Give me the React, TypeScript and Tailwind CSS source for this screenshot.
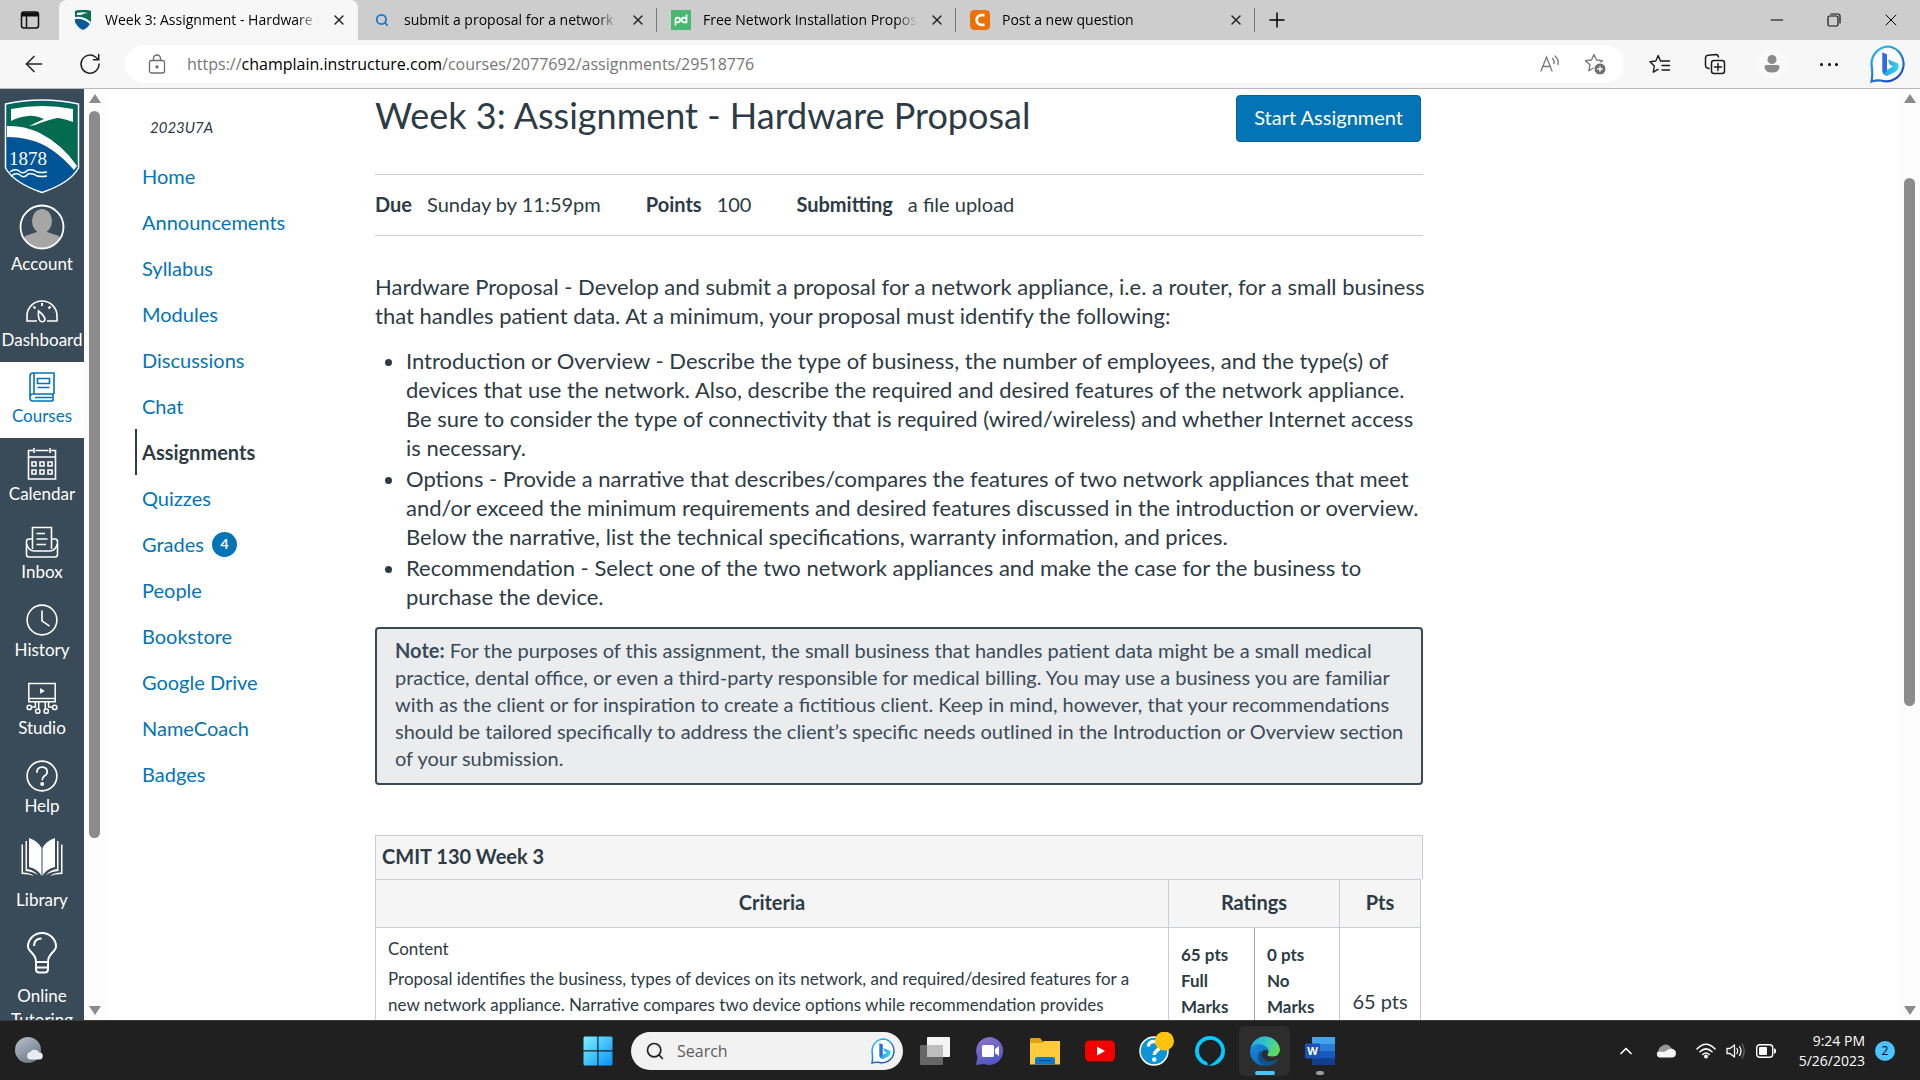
import React from 'react';
import { ArrowLeft, ChevronUp, Minus, Plus, Search, X } from 'lucide-react';

const uiFont = "font-['Open_Sans','Noto_Sans',sans-serif]";
const pageFont = "font-['Lato','Liberation_Sans',sans-serif]";

/* ---------- browser icons ---------- */

const ShieldFavicon = () => (
  <svg viewBox="0 0 18 20" className="h-5 w-[18px]">
    <path d="M1 1Q9-1 17 1V12Q15 17 9 20Q3 17 1 12Z" fill="#0b5a9c" />
    <path d="M1 1Q9-1 17 1V12Q12 6 1 6Z" fill="#0a7050" />
    <path d="M3 3Q9 1.500 14 3Q10 3 7 5L3 5ZM1 7Q10 6 17 12L16 14Q9 8 1 9Z" fill="#fff" />
  </svg>
);

const PandaFavicon = () => (
  <svg viewBox="0 0 20 20" className="h-5 w-5">
    <rect width="20" height="20" fill="#47b972" />
    <g fill="none" stroke="#fff" strokeWidth="1.700">
      <path d="M4.500 15.500V10A2.300 2.300 0 1 1 6.800 12.300H5.500" />
      <path d="M15.500 4.500V12.300H13A2.300 2.300 0 1 1 15.300 9.700" />
    </g>
  </svg>
);

const CheggFavicon = () => (
  <svg viewBox="0 0 20 20" className="h-5 w-5">
    <rect width="20" height="20" rx="4.500" fill="#eb7100" />
    <path d="M14.500 14.800H11.500A4.800 4.800 0 0 1 11.500 5.200H14.500" fill="none" stroke="#fff" strokeWidth="2.800" />
  </svg>
);

const BingLogo = ({ className }: { className: string }) => (
  <svg viewBox="0 0 38 38" className={className}>
    <defs>
      <linearGradient id="bingRing" x1="0" y1="0" x2="0.6" y2="1">
        <stop offset="0" stopColor="#26c4f0" />
        <stop offset="1" stopColor="#1e50c8" />
      </linearGradient>
      <linearGradient id="bingB" x1="0" y1="0" x2="1" y2="0.4">
        <stop offset="0" stopColor="#2d7de8" />
        <stop offset="1" stopColor="#2fd2ee" />
      </linearGradient>
    </defs>
    <path d="M19 1.500A17.500 17.500 0 1 1 11 35.500Q6 35 1.500 36.500Q3 30 1.500 19A17.500 17.500 0 0 1 19 1.500Z" fill="#fff" stroke="url(#bingRing)" strokeWidth="2.200" />
    <path d="M12.500 7.500L17 9.500V25L23 21.500L19.500 19.500L18 14.500L28 18.500Q30 23 26 26.500L17 31Q12.500 30 12.500 25.500Z" fill="url(#bingB)" />
    <path d="M12.500 7.500L17 9.500V25L13.500 29Q12.500 27.500 12.500 25.500Z" fill="#2b6fe3" />
  </svg>
);

const TabMenuIcon = () => (
  <svg viewBox="0 0 20 20" className="h-5 w-5" fill="none" stroke="#111" strokeWidth="1.500">
    <rect x="1.500" y="2" width="17" height="16" rx="2.500" />
    <path d="M2 4.500H18" strokeWidth="4" />
    <path d="M6.500 6V18" />
  </svg>
);

const RefreshIcon = () => (
  <svg viewBox="0 0 22 22" className="h-[22px] w-[22px]" fill="none" stroke="#222" strokeWidth="1.500" strokeLinecap="round">
    <path d="M20 11A9 9 0 1 1 16.500 4L19.500 6.500" />
    <path d="M19.700 1.500V6.700H14.500" />
  </svg>
);

const PadlockIcon = () => (
  <svg viewBox="0 0 18 20" className="h-5 w-[18px]" fill="none" stroke="#6b6b6b" strokeWidth="1.300">
    <rect x="1.500" y="6.500" width="15" height="12.500" rx="2" />
    <path d="M5.500 6.500V4.500A3.500 3.500 0 0 1 12.500 4.500V6.500" />
    <circle cx="9" cy="12.800" r="1" fill="#6b6b6b" />
  </svg>
);

const ReadAloudIcon = () => (
  <svg viewBox="0 0 20 20" className="h-5 w-5" fill="none" stroke="#777" strokeWidth="1.300" strokeLinecap="round">
    <path d="M1 17L6.500 3L12 17M3 12.500H10" />
    <path d="M12.500 4.500Q14.500 6.500 14 9.500M15 2Q19 5.500 18 10.500" />
  </svg>
);

const starPath = 'M10 1.500L12.500 7L18.500 7.700L14 11.800L15.200 17.800L10 14.800L4.800 17.800L6 11.800L1.500 7.700L7.500 7Z';

const AddFavoriteIcon = () => (
  <svg viewBox="0 0 22 22" className="h-[22px] w-[22px]">
    <path d={starPath} fill="none" stroke="#777" strokeWidth="1.300" strokeLinejoin="round" />
    <circle cx="16" cy="16" r="6" fill="#707070" stroke="#fff" />
    <path d="M16 13.300V18.700M13.300 16H18.700" stroke="#fff" strokeWidth="1.300" />
  </svg>
);

const FavoritesIcon = () => (
  <svg viewBox="0 0 22 20" className="h-5 w-[22px]" fill="none" stroke="#1b1b1b" strokeWidth="1.400" strokeLinecap="round" strokeLinejoin="round">
    <path d="M11.500 7L9.200 1.500L6.800 7L1 7.800L5.300 12L4.300 18.200L9 15.300M11.500 7H20.500M13 11.500H20.500M13 16H20.500" />
  </svg>
);

const CollectionsIcon = () => (
  <svg viewBox="0 0 22 22" className="h-[22px] w-[22px]" fill="none" stroke="#1b1b1b" strokeWidth="1.500" strokeLinecap="round">
    <rect x="7.500" y="7.500" width="13" height="13" rx="2.500" />
    <path d="M14 10.500V17.500M10.500 14H17.500" />
    <path d="M5 15.500L3.200 15Q1.500 14.300 1.500 12.500V4.500Q2 2.500 4 2.300L12 1.500Q14 1.500 14.500 4" />
  </svg>
);

/* ---------- Canvas icons ---------- */

const SchoolLogo = () => (
  <svg viewBox="0 0 76 95" className="h-[95px] w-[76px]" role="img" aria-label="Champlain College">
    <path d="M1.500 5Q38-3 74.500 5V69Q66 84 38 93.500Q10 84 1.500 69Z" fill="#005596" stroke="#fff" strokeWidth="1.500" />
    <path d="M3 6.500Q38-1 73 6.500V67Q58 44 30 32Q18 27 3 27Z" fill="#046a50" />
    <path d="M7 10Q38 4 69 10V23Q58 19 53 19Q44 21 36 24Q31 27 25 27L40 20Q30 16 24 17Q14 18 7 22Z" fill="#fff" />
    <path d="M3 27Q18 26 34 33Q58 45 73 67L70 71Q48 46 26 41Q16 38 3 38Z" fill="#fff" />
    <text x="5" y="66" fill="#fff" fontSize="19" fontFamily="Liberation Serif, serif">1878</text>
    <path d="M6 73Q11 69 15 72Q19 76 24 71Q29 70 33 73Q38 74 43 73M7 77Q12 73 16 76Q20 80 24 75Q29 74 33 77Q38 78 43 77" fill="none" stroke="#fff" strokeWidth="1.500" />
  </svg>
);

const AvatarIcon = () => (
  <svg viewBox="0 0 46 46" className="h-[46px] w-[46px]">
    <defs>
      <clipPath id="avatarClip"><circle cx="23" cy="23" r="21" /></clipPath>
    </defs>
    <circle cx="23" cy="23" r="21.500" fill="#394b58" />
    <g fill="#a6a6a6" clipPath="url(#avatarClip)">
      <ellipse cx="23" cy="17" rx="10" ry="12" />
      <path d="M18 25H28V28L40 32Q42 36 42 46H4Q4 36 6 32L18 28Z" />
    </g>
    <circle cx="23" cy="23" r="21.500" fill="none" stroke="#fff" strokeWidth="1.800" />
  </svg>
);

const line = { fill: 'none', stroke: 'currentColor', strokeWidth: 1.6 } as const;

const DashboardIcon = () => (
  <svg viewBox="0 0 34 30" className="h-[30px] w-[34px]" {...line}>
    <path d="M12 25H2V20A15 15 0 0 1 32 20V25H22" />
    <path d="M17 7V10M8.500 10.500L10.500 12.500M25.500 10.500L23.500 12.500" strokeWidth="2" />
    <path d="M13.500 15Q20 20 20 24A3 3 0 0 1 14.500 24Q13 21 13.500 15Z" />
  </svg>
);

const CoursesIcon = () => (
  <svg viewBox="0 0 26 30" className="h-[30px] w-[26px]" {...line}>
    <path d="M25 22V1H4Q1 1 1 4V26Q1 29 4 29H24M25 22H4Q1 22 1 25.500M24 22V29M5 1.500V22M6 25.500H23" />
    <path d="M8.500 6.500H20.500V11.500H8.500ZM8.500 15.500H20.500" />
  </svg>
);

const CalendarIcon = () => (
  <svg viewBox="0 0 30 32" className="h-8 w-[30px]" {...line}>
    <path d="M6 2.500H1.500V31H28.500V2.500H24M8.500 2.500H21.500M7 0V5M23 0V5M1.500 9H28.500" />
    <path d="M5 14H9V18H5ZM13 14H17V18H13ZM21 14H25V18H21ZM5 22H9V26H5ZM13 22H17V26H13ZM21 22H25V26H21Z" />
  </svg>
);

const InboxIcon = () => (
  <svg viewBox="0 0 34 32" className="h-8 w-[34px]" {...line}>
    <path d="M7.500 23V1.500H26.500V23M11.500 7.500H20M11.500 13H22.500M11.500 18.500H21" />
    <path d="M7.500 13H4Q1.500 13 1.500 15.500V28.500Q1.500 31 4 31H30Q32.500 31 32.500 28.500V15.500Q32.500 13 30 13H26.500" />
    <path d="M1.500 18Q4 25 9 25H25Q30 25 32.500 18" />
  </svg>
);

const HistoryIcon = () => (
  <svg viewBox="0 0 34 34" className="h-8 w-8" {...line} strokeWidth="1.700">
    <circle cx="17" cy="17" r="15.800" />
    <path d="M17 7V18L25 23.500" />
  </svg>
);

const StudioIcon = () => (
  <svg viewBox="0 0 34 34" className="h-8 w-8" {...line}>
    <path d="M3 1.500H31V21H3ZM3 17.500H31" />
    <path d="M15 6.500L20 9.500L15 12.500Z" fill="currentColor" stroke="none" />
    <path d="M10 21V26.500H5.500M13.500 21V29M20.500 21V29M24 21V26.500H28.500" />
    <circle cx="3.500" cy="27" r="2.300" /><circle cx="12.500" cy="31" r="2.300" />
    <circle cx="21.500" cy="31" r="2.300" /><circle cx="30.500" cy="27" r="2.300" />
  </svg>
);

const HelpIcon = () => (
  <svg viewBox="0 0 34 34" className="h-8 w-8" {...line} strokeWidth="1.800">
    <circle cx="17" cy="17" r="15.800" />
    <path d="M11.500 13.500Q11.500 7.500 17 7.500Q22.500 7.500 22.500 12.500Q22.500 15.500 19.500 17Q17.200 18.500 17.200 21.500" />
    <circle cx="17.200" cy="25.500" r="1.200" fill="currentColor" />
  </svg>
);

const LibraryIcon = () => (
  <svg viewBox="0 0 42 39" className="h-[39px] w-[42px]" fill="currentColor">
    <path d="M8 0Q17 3 20.500 10V38Q17 31 8 29ZM34 0Q25 3 21.500 10V38Q25 31 34 29Z" />
    <path d="M4.500 3H6V31Q13 32 17 37Q12 33.500 4.500 33ZM37.500 3H36V31Q29 32 25 37Q30 33.500 37.500 33Z" />
    <path d="M.5 6.500H2V34.500Q9 34.500 13 38Q8 36 .5 36ZM41.500 6.500H40V34.500Q33 34.500 29 38Q34 36 41.500 36Z" />
  </svg>
);

const BulbIcon = () => (
  <svg viewBox="0 0 30 42" className="h-[42px] w-[30px]" {...line} strokeWidth="2">
    <path d="M9 30Q9 25 5 21Q1 17 1 14.500A14 13.500 0 0 1 29 14.500Q29 17 25 21Q21 25 21 30V37Q21 40.500 18 40.500H12Q9 40.500 9 37ZM9 30H21M9 35.500H21" />
    <path d="M7 14Q7 6.500 14.500 6.500" />
  </svg>
);

/* ---------- taskbar icons ---------- */

const WeatherIcon = () => (
  <svg viewBox="0 0 28 28" className="h-7 w-7">
    <defs>
      <linearGradient id="moon" x1="0" y1="0" x2="0.7" y2="1">
        <stop offset="0" stopColor="#b9c3cf" />
        <stop offset="1" stopColor="#6f7986" />
      </linearGradient>
    </defs>
    <circle cx="13" cy="13" r="13" fill="url(#moon)" />
    <path d="M15 22.500A4 4 0 0 1 15.500 14.700A5 5 0 0 1 24 15.500A3.500 3.500 0 0 1 24.500 22.500Z" fill="#e9edf2" />
  </svg>
);

const StartIcon = () => (
  <svg viewBox="0 0 30 30" className="h-[30px] w-[30px]">
    <defs>
      <linearGradient id="win" x1="0" y1="0" x2="1" y2="1">
        <stop offset="0" stopColor="#7cf3ff" />
        <stop offset="1" stopColor="#0890f8" />
      </linearGradient>
    </defs>
    <path d="M2 .5H14.300V14.300H.5V2Q.5.500 2 .5ZM15.500.5H28Q29.500.5 29.500 2V14.300H15.500ZM.5 15.500H14.300V29.500H2Q.5 29.500.5 28ZM15.500 15.500H29.500V28Q29.500 29.500 28 29.500H15.500Z" fill="url(#win)" />
  </svg>
);

const TaskViewIcon = () => (
  <svg viewBox="0 0 30 30" className="h-[30px] w-[30px]">
    <rect y="9" width="23" height="20" rx="1" fill="#666" />
    <rect x="7" y="1" width="23" height="20" rx="1" fill="#f4f4f4" />
    <rect x="7" y="9" width="16" height="12" fill="#bdbdbd" />
  </svg>
);

const ChatIcon = () => (
  <svg viewBox="0 0 30 30" className="h-[30px] w-[30px]">
    <defs>
      <linearGradient id="chat" x1="0.2" y1="0" x2="0.6" y2="1">
        <stop offset="0" stopColor="#8b74c8" />
        <stop offset="1" stopColor="#4f55c8" />
      </linearGradient>
    </defs>
    <path d="M15 1A14 14 0 1 1 9 28L1 29L2.500 21A14 14 0 0 1 15 1Z" fill="url(#chat)" />
    <rect x="7" y="9" width="12" height="12" rx="1.500" fill="#fff" />
    <path d="M20 13L24 10V20L20 17Z" fill="#fff" />
  </svg>
);

const ExplorerIcon = () => (
  <svg viewBox="0 0 30 30" className="h-[30px] w-[30px]">
    <path d="M0 3Q0 2 1 2H10L13 5.500H12V9H0Z" fill="#e2a10c" />
    <path d="M0 7H11L14 5H30V28.500H0Z" fill="#ffcb3d" />
    <path d="M5 28.500V23Q5 21 7 21H23Q25 21 25 23V28.500Z" fill="#0f78cc" />
    <path d="M9 24.500H21" stroke="#0b4f8d" />
  </svg>
);

const YoutubeIcon = () => (
  <svg viewBox="0 0 30 30" className="h-[30px] w-[30px]">
    <rect y="4.500" width="30" height="21" rx="4.500" fill="#f40000" />
    <path d="M12 10.500L20 15L12 19.500Z" fill="#fff" />
  </svg>
);

const GetHelpIcon = () => (
  <svg viewBox="0 0 38 38" className="h-[38px] w-[38px]">
    <circle cx="18" cy="19" r="14" fill="#0c94d6" stroke="#fff" strokeWidth="1.500" />
    <path d="M12.500 14.500Q12.500 9.500 18 9.500Q23.500 9.500 23.500 14.500Q23.500 17 20.500 19Q18.300 20.500 18.300 23" fill="none" stroke="#fff" strokeWidth="3.400" />
    <circle cx="18.300" cy="27.500" r="2.200" fill="#fff" />
    <circle cx="28.500" cy="9" r="9.500" fill="#ffc20e" />
  </svg>
);

const AlexaIcon = () => (
  <svg viewBox="0 0 30 30" className="h-[30px] w-[30px]">
    <path fillRule="evenodd" d="M15 0A15 15 0 1 1 15 30A15 15 0 1 1 15 0ZM15 3.700A11.300 11.300 0 0 0 11.500 25.700Q12.600 26.200 12.600 27.500V29.500L14 29.800Q26.300 22 26.300 15A11.300 11.300 0 0 0 15 3.700Z" fill="#00caff" />
  </svg>
);

const EdgeIcon = () => (
  <svg viewBox="0 0 30 30" className="h-[30px] w-[30px]">
    <defs>
      <linearGradient id="edgeTop" x1="0" y1="0.3" x2="1" y2="0.6">
        <stop offset="0" stopColor="#2ba9e0" />
        <stop offset="0.5" stopColor="#34c6c3" />
        <stop offset="1" stopColor="#62e14e" />
      </linearGradient>
      <linearGradient id="edgeLow" x1="0" y1="0" x2="0.6" y2="1">
        <stop offset="0" stopColor="#1a8fe0" />
        <stop offset="1" stopColor="#0b62b8" />
      </linearGradient>
    </defs>
    <path d="M.5 12A15 15 0 0 1 30 13.500Q29.500 20 23 20.500Q17 20.500 17.500 18.500Q20 15 16.500 11.500Q9 6 .5 12Z" fill="url(#edgeTop)" />
    <path d="M0 15Q1 8 9 8Q17 8.500 18.500 15Q12 12 11 19Q11 27 20 29Q7 32 1.500 22Q0 19 0 15Z" fill="url(#edgeLow)" />
    <path d="M11.500 14Q10 21 16 24.500Q22 27 27.500 23Q28.500 23 28 24Q24 29.500 17 30Q8 28 8 20Q8.500 16 11.500 14Z" fill="#10508f" />
  </svg>
);

const WordIcon = () => (
  <svg viewBox="0 0 30 30" className="h-[30px] w-[30px]">
    <path d="M7 1H30V8H7Z" fill="#41a5ee" />
    <path d="M7 8H30V15H7Z" fill="#2b7cd3" />
    <path d="M7 15H30V22H7Z" fill="#185abd" />
    <path d="M7 22H30V29H7Z" fill="#103f91" />
    <rect y="7.500" width="15" height="15" rx="1" fill="#1c52b5" />
    <text x="7.500" y="19" textAnchor="middle" fill="#fff" fontSize="11" fontWeight="700" fontFamily="Open Sans">W</text>
  </svg>
);

const CloudIcon = () => (
  <svg viewBox="0 0 20 14" className="h-[14px] w-5">
    <path d="M3 9A5 5 0 0 1 6 2Q9-.5 13 1.500Q15.500 3 16 6Q12 10 3 9Z" fill="#969696" />
    <path d="M3.500 13.500A3.500 3.500 0 0 1 2 7.500L8 8L14.500 4.500Q20 5 20 9.500Q19.500 13.500 16 13.500Z" fill="#f5f5f5" />
  </svg>
);

const WifiIcon = () => (
  <svg viewBox="0 0 20 16" className="h-4 w-5" fill="none" stroke="#fff" strokeWidth="1.500" strokeLinecap="round">
    <path d="M1 6Q10-3.500 19 6M4 8.800Q10 3 16 8.800M6.800 11.500Q10 8.500 13.200 11.500" />
    <circle cx="10" cy="13.500" r="1.200" fill="#fff" />
  </svg>
);

const VolumeIcon = () => (
  <svg viewBox="0 0 20 16" className="h-4 w-5" fill="none" stroke="#fff" strokeWidth="1.300" strokeLinecap="round" strokeLinejoin="round">
    <path d="M1 5.500H4L8.500 2V14L4 10.500H1ZM11 5.500Q12.500 8 11 10.500M13.500 3.500Q16.500 8 13.500 12.500" />
    <path d="M16 1Q20.500 8 16 15" stroke="#666" />
  </svg>
);

const BatteryIcon = () => (
  <svg viewBox="0 0 20 14" className="h-[14px] w-5">
    <rect x=".7" y=".7" width="16" height="12.600" rx="3" fill="none" stroke="#fff" strokeWidth="1.400" />
    <rect x="3" y="3" width="8" height="8" rx="1" fill="#fff" />
    <path d="M18 4.500H19Q20 5 20 7T19 9.500H18Z" fill="#fff" />
  </svg>
);

/* ---------- data ---------- */

interface Tab {
  title: string;
  icon: React.ReactNode;
  active?: boolean;
}

const tabs: Tab[] = [
  { title: 'Week 3: Assignment - Hardware Proposal', icon: <ShieldFavicon />, active: true },
  { title: 'submit a proposal for a network appliance', icon: <Search className="h-[14px] w-[14px] text-[#1a75cf]" strokeWidth={3} /> },
  { title: 'Free Network Installation Proposal', icon: <PandaFavicon /> },
  { title: 'Post a new question', icon: <CheggFavicon /> },
];

const globalNav = [
  { label: 'Account', icon: <AvatarIcon />, box: 'h-[46px]' },
  { label: 'Dashboard', icon: <DashboardIcon />, box: 'h-[30px]' },
  { label: 'Courses', icon: <CoursesIcon />, box: 'h-[30px]', active: true },
  { label: 'Calendar', icon: <CalendarIcon />, box: 'h-8' },
  { label: 'Inbox', icon: <InboxIcon />, box: 'h-8' },
  { label: 'History', icon: <HistoryIcon />, box: 'h-8' },
  { label: 'Studio', icon: <StudioIcon />, box: 'h-8' },
  { label: 'Help', icon: <HelpIcon />, box: 'h-8' },
  { label: 'Library', icon: <LibraryIcon />, box: 'h-12' },
  { label: 'Online Tutoring', icon: <BulbIcon />, box: 'h-[50px]' },
];

const courseNav = [
  'Home', 'Announcements', 'Syllabus', 'Modules', 'Discussions', 'Chat', 'Assignments',
  'Quizzes', 'Grades', 'People', 'Bookstore', 'Google Drive', 'NameCoach', 'Badges',
];

const taskbarApps = [
  { name: 'Task view', icon: <TaskViewIcon /> },
  { name: 'Chat', icon: <ChatIcon /> },
  { name: 'File Explorer', icon: <ExplorerIcon /> },
  { name: 'YouTube', icon: <YoutubeIcon /> },
  { name: 'Get Help', icon: <GetHelpIcon /> },
  { name: 'Alexa', icon: <AlexaIcon /> },
  { name: 'Microsoft Edge', icon: <EdgeIcon />, state: 'active' },
  { name: 'Word', icon: <WordIcon />, state: 'open' },
];

/* ---------- sections ---------- */

const TabBar = () => (
  <div className="flex h-10 shrink-0 bg-[#cdcdcd]">
    <button aria-label="Tab actions" className="flex w-[59px] items-center justify-center">
      <TabMenuIcon />
    </button>
    {tabs.map((tab) => (
      <div
        key={tab.title}
        className={`flex w-[299px] items-center pl-[14px] pr-[11px] ${tab.active ? 'rounded-t-lg bg-[#f7f7f7]' : ''}`}
      >
        <span className="flex w-5 shrink-0 justify-center">{tab.icon}</span>
        <span className="ml-3 flex-1 overflow-hidden whitespace-nowrap text-sm text-black [mask-image:linear-gradient(to_right,black_90%,transparent)]">
          {tab.title}
        </span>
        <button aria-label="Close tab" className="ml-3 text-[#222]">
          <X className="h-4 w-4" strokeWidth={2} />
        </button>
        {!tab.active && <span className="-mr-[11px] ml-[10px] h-6 w-px bg-[#777]" />}
      </div>
    ))}
    <button aria-label="New tab" className="flex w-11 items-center justify-center">
      <Plus className="h-6 w-6" strokeWidth={1.5} />
    </button>
    <div className="ml-auto flex">
      <button aria-label="Minimize" className="flex w-[57px] items-center justify-center">
        <Minus className="h-5 w-5" strokeWidth={1.2} />
      </button>
      <button aria-label="Restore" className="flex w-[57px] items-center justify-center">
        <svg viewBox="0 0 14 14" className="h-[14px] w-[14px]" fill="none" stroke="#111" strokeWidth="1.200">
          <rect x="1" y="3" width="10" height="10" rx="1.500" />
          <path d="M3.500 1H11Q13 1 13 3V10.500" />
        </svg>
      </button>
      <button aria-label="Close window" className="flex w-[58px] items-center justify-center">
        <X className="h-5 w-5" strokeWidth={1.2} />
      </button>
    </div>
  </div>
);

const Toolbar = () => (
  <div className="flex h-[49px] shrink-0 items-center border-b border-[#b9b9b9] bg-[#f7f7f7] pl-[6px] pr-3">
    <button aria-label="Back" className="flex w-14 justify-center">
      <ArrowLeft className="h-[26px] w-[26px] text-[#222]" strokeWidth={1.4} />
    </button>
    <button aria-label="Refresh" className="flex w-14 justify-center">
      <RefreshIcon />
    </button>
    <div className="ml-[7px] flex h-[38px] flex-1 items-center rounded-full bg-white pl-[23px] pr-[18px]">
      <PadlockIcon />
      <div className="ml-[21px] flex-1 whitespace-nowrap text-base text-[#767676]">
        https://<span className="text-black">champlain.instructure.com</span>/courses/2077692/assignments/29518776
      </div>
      <button aria-label="Read aloud"><ReadAloudIcon /></button>
      <button aria-label="Add to favorites" className="ml-6"><AddFavoriteIcon /></button>
    </div>
    <div className="flex items-center">
      <button aria-label="Favorites" className="ml-[25px] flex w-[22px] justify-center"><FavoritesIcon /></button>
      <button aria-label="Collections" className="ml-[33px]"><CollectionsIcon /></button>
      <button aria-label="Profile" className="ml-8 flex h-7 w-7 items-center justify-center rounded-full border border-white bg-[#f9f9f9]">
        <svg viewBox="0 0 16 18" className="h-[18px] w-4" fill="#8a8a8a">
          <circle cx="8" cy="4.500" r="4.500" />
          <path d="M2.500 10H13.500Q15.500 10 15.500 12Q15 17.500 8 17.500T.5 12Q.5 10 2.500 10Z" />
        </svg>
      </button>
      <button aria-label="Settings and more" className="ml-[34px] flex w-[18px] justify-between">
        <span className="h-[3px] w-[3px] rounded-full bg-black" />
        <span className="h-[3px] w-[3px] rounded-full bg-black" />
        <span className="h-[3px] w-[3px] rounded-full bg-black" />
      </button>
      <button aria-label="Bing" className="ml-8"><BingLogo className="h-[38px] w-[38px]" /></button>
    </div>
  </div>
);

const ScrollTrack = ({ thumb }: { thumb: string }) => (
  <div className="flex w-[21px] shrink-0 flex-col items-center bg-[#fcfcfc] py-[5px]">
    <svg viewBox="0 0 12 9" className="h-[9px] w-3 shrink-0"><path d="M6 0L12 9H0Z" fill="#8b8b8b" /></svg>
    <div className="flex w-full flex-1 flex-col items-center pt-2">
      <div className={`w-[11px] rounded-full bg-[#8b8b8b] ${thumb}`} />
    </div>
    <svg viewBox="0 0 12 9" className="h-[9px] w-3 shrink-0"><path d="M6 9L0 0H12Z" fill="#8b8b8b" /></svg>
  </div>
);

const GlobalNav = () => (
  <nav aria-label="Global" className="w-[84px] shrink-0 overflow-hidden bg-[#394b58] pt-[10px] text-white">
    <a href="#" className="flex justify-center"><SchoolLogo /></a>
    {globalNav.map((item) => (
      <a
        key={item.label}
        href="#"
        className={`flex flex-col items-center py-[10px] text-center text-[17px] leading-6 ${item.active ? 'bg-white text-[#0374b5]' : ''}`}
      >
        <span className={`mb-[2px] flex justify-center ${item.box}`}>{item.icon}</span>
        {item.label}
      </a>
    ))}
  </nav>
);

const CourseNav = () => (
  <nav aria-label="Course" className="w-[240px] shrink-0 pl-[30px] pt-[26px]">
    <p className="pl-[15px] text-[15px] italic leading-6 text-[#2d3b45]">2023U7A</p>
    <ul className="mt-[14px]">
      {courseNav.map((name) => (
        <li key={name}>
          <a
            href="#"
            className={`flex h-[46px] items-center border-l-2 pl-[5px] text-[20px] ${
              name === 'Assignments' ? 'border-[#2d3b45] font-bold text-[#2d3b45]' : 'border-transparent text-[#0374b5]'
            }`}
          >
            {name}
            {name === 'Grades' && (
              <span className="ml-2 flex h-[25px] w-[25px] items-center justify-center rounded-full bg-[#0374b5] text-sm font-bold text-white">
                4
              </span>
            )}
          </a>
        </li>
      ))}
    </ul>
  </nav>
);

const Rubric = () => (
  <section className="mt-[50px]">
    <h2 className="h-[44px] border border-b-0 border-[#c7cdd1] bg-[#f5f5f5] pl-[6px] text-[20px] font-bold leading-[40px]">
      CMIT 130 Week 3
    </h2>
    <div className="pr-[2px]">
      <table className="w-full border-collapse">
        <thead>
          <tr className="h-12 bg-[#f5f5f5] text-[20px]">
            <th className="border border-[#c7cdd1] pb-[3px]">Criteria</th>
            <th colSpan={2} className="w-[171px] border border-[#c7cdd1] pb-[3px]">Ratings</th>
            <th className="w-[81px] border border-[#c7cdd1] pb-[3px]">Pts</th>
          </tr>
        </thead>
        <tbody>
          <tr className="align-top text-[17px] leading-[26px]">
            <td className="border border-[#c7cdd1] px-3 pt-2">
              <p>Content</p>
              <p className="mt-1">
                Proposal identifies the business, types of devices on its network, and required/desired features for a
                new network appliance. Narrative compares two device options while recommendation provides
                justification for the selected device.
              </p>
            </td>
            <td className="w-[86px] border border-[#c7cdd1] border-r-[#a5a5a5] px-3 pt-[14px] font-bold">
              65 pts<br />Full<br />Marks
            </td>
            <td className="w-[85px] border border-[#c7cdd1] px-3 pt-[14px] font-bold">
              0 pts<br />No<br />Marks
            </td>
            <td className="border border-[#c7cdd1] pt-[60px] text-center text-[20px]">65 pts</td>
          </tr>
        </tbody>
      </table>
    </div>
  </section>
);

const Assignment = () => (
  <main className="min-w-0 flex-1 pl-[30px] pt-[6px] text-[#2d3b45]">
    <div className="flex items-start justify-between pr-[2px]">
      <h1 className="text-[36px] leading-[40px]">Week 3: Assignment - Hardware Proposal</h1>
      <button className="h-[47px] rounded-sm border border-[#0a5f94] bg-[#0374b5] px-[17px] pb-[3px] text-[20px] text-white">
        Start Assignment
      </button>
    </div>
    <dl className="mt-8 flex h-[62px] items-center gap-[45px] border-y border-[#c7cdd1] pb-[3px] text-[20px]">
      <div className="flex gap-[15px]"><dt className="font-bold">Due</dt><dd>Sunday by 11:59pm</dd></div>
      <div className="flex gap-[15px]"><dt className="font-bold">Points</dt><dd>100</dd></div>
      <div className="flex gap-[15px]"><dt className="font-bold">Submitting</dt><dd>a file upload</dd></div>
    </dl>
    <div className="-mr-1 mt-9 text-[22px] leading-[29px]">
      <p>
        Hardware Proposal - Develop and submit a proposal for a network appliance, i.e. a router, for a small business
        that handles patient data. At a minimum, your proposal must identify the following:
      </p>
      <ul className="mt-4 list-disc space-y-[2px] pl-[31px]">
        <li>
          Introduction or Overview - Describe the type of business, the number of employees, and the type(s) of devices
          that use the network. Also, describe the required and desired features of the network appliance. Be sure to
          consider the type of connectivity that is required (wired/wireless) and whether Internet access is necessary.
        </li>
        <li>
          Options - Provide a narrative that describes/compares the features of two network appliances that meet and/or
          exceed the minimum requirements and desired features discussed in the introduction or overview. Below the
          narrative, list the technical specifications, warranty information, and prices.
        </li>
        <li>
          Recommendation - Select one of the two network appliances and make the case for the business to purchase the
          device.
        </li>
      </ul>
    </div>
    <p className="mt-4 rounded-sm border-2 border-[#394b58] bg-[#ebecee] pb-[11px] pl-[18px] pr-3 pt-2 text-[20px] leading-[27px] text-[#394b58]">
      <strong>Note:</strong> For the purposes of this assignment, the small business that handles patient data might be
      a small medical practice, dental office, or even a third-party responsible for medical billing. You may use a
      business you are familiar with as the client or for inspiration to create a fictitious client. Keep in mind,
      however, that your recommendations should be tailored specifically to address the client’s specific needs
      outlined in the Introduction or Overview section of your submission.
    </p>
    <Rubric />
  </main>
);

const Taskbar = () => (
  <footer className="z-10 grid h-[60px] shrink-0 grid-cols-[1fr_auto_1fr] items-center border-t border-[#3c3c3c] bg-[#202020] text-white">
    <button aria-label="Weather" className="ml-[15px] w-7"><WeatherIcon /></button>
    <div className="flex items-center pl-[10px]">
      <button aria-label="Start" className="mr-[18px]"><StartIcon /></button>
      <label className="mr-1 flex h-[38px] w-[272px] items-center rounded-full bg-[#f2f2f2] px-[14px]">
        <Search className="h-5 w-5 text-[#222]" />
        <input
          aria-label="Search"
          placeholder="Search"
          className="ml-3 w-0 flex-1 bg-transparent text-base text-black outline-none placeholder:text-[#5c5c5c]"
        />
        <BingLogo className="-mr-2 h-[26px] w-[26px]" />
      </label>
      {taskbarApps.map((app) => (
        <button
          key={app.name}
          aria-label={app.name}
          className={`relative mx-[2px] flex h-[50px] w-[51px] items-center justify-center rounded-md ${
            app.state === 'active' ? 'bg-[#2d2d2d]' : ''
          }`}
        >
          {app.icon}
          {app.state === 'active' && <span className="absolute bottom-[1px] h-1 w-5 rounded-full bg-[#4cc2ff]" />}
          {app.state === 'open' && <span className="absolute bottom-[1px] h-1 w-2 rounded-full bg-[#9a9a9a]" />}
        </button>
      ))}
    </div>
    <div className="flex items-center justify-end pr-[25px]">
      <button aria-label="Show hidden icons" className="mr-5"><ChevronUp className="h-5 w-5" /></button>
      <span className="mr-5"><CloudIcon /></span>
      <span className="mr-[10px]"><WifiIcon /></span>
      <span className="mr-[10px]"><VolumeIcon /></span>
      <BatteryIcon />
      <div className="ml-[23px] text-right text-sm leading-5">
        <div>9:24 PM</div>
        <div>5/26/2023</div>
      </div>
      <span className="ml-[10px] flex h-5 w-5 items-center justify-center rounded-full bg-[#4cc2ff] text-xs text-black">2</span>
    </div>
  </footer>
);

const App: React.FC = () => {
  return (
    <div className={`flex h-screen flex-col overflow-hidden bg-white ${uiFont}`}>
      <TabBar />
      <Toolbar />
      <div className={`flex min-h-0 flex-1 overflow-hidden ${pageFont}`}>
        <GlobalNav />
        <ScrollTrack thumb="h-[727px]" />
        <CourseNav />
        <Assignment />
        <div className="w-[476px] shrink-0" />
        <ScrollTrack thumb="mt-[67px] h-[528px]" />
      </div>
      <Taskbar />
    </div>
  );
};

export default App;
